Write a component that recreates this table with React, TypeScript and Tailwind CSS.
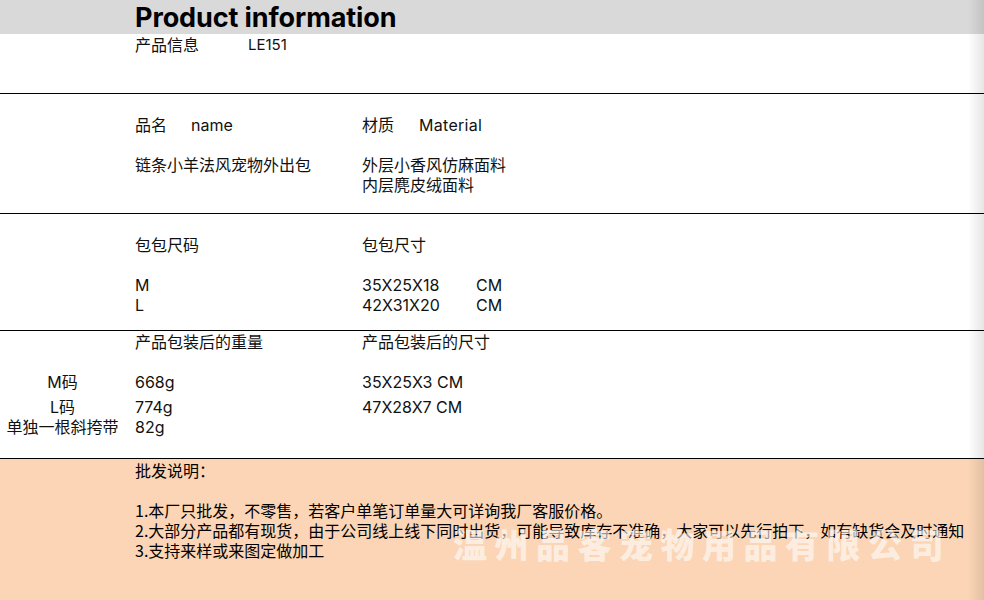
import React from "react";

const sans = { fontFamily: '"Inter", "Noto Sans CJK SC", sans-serif' };
const cjk = { fontFamily: '"Noto Sans CJK SC", "Liberation Sans", sans-serif' };

export default function App() {
  return (
    <div className="relative w-[984px] h-[600px] overflow-hidden bg-white text-[#111]" style={sans}>
      {/* header */}
      <div className="h-[34px] bg-[#d9d9d9] pl-[135px] flex items-center">
        <h1 className="text-[27px] font-bold leading-none tracking-[-0.1px] text-black">Product information</h1>
      </div>
      {/* section 1 */}
      <div className="h-[60px] pl-[135px] pt-[1px] grid grid-cols-[113px_1fr] text-[16px] leading-[20px] border-b border-black">
        <span>产品信息</span>
        <span className="text-[15px]">LE151</span>
      </div>
      {/* section 2 */}
      <div className="h-[120px] pt-[21px] grid grid-cols-[135px_227px_1fr] text-[16px] leading-[20px] border-b border-black">
        <div />
        <div className="flex flex-col gap-[20px]">
          <div className="flex">
            <span className="w-[56px]">品名</span>
            <span>name</span>
          </div>
          <div>链条小羊法风宠物外出包</div>
        </div>
        <div className="flex flex-col gap-[20px]">
          <div className="flex">
            <span className="w-[57px]">材质</span>
            <span className="tracking-[0.3px]">Material</span>
          </div>
          <div>
            <div>外层小香风仿麻面料</div>
            <div>内层麂皮绒面料</div>
          </div>
        </div>
      </div>
      {/* section 3 */}
      <div className="h-[117px] pt-[21px] grid grid-cols-[135px_227px_1fr] text-[16px] leading-[20px] border-b border-black">
        <div />
        <div className="flex flex-col gap-[20px]">
          <div>包包尺码</div>
          <div>
            <div>M</div>
            <div>L</div>
          </div>
        </div>
        <div className="flex flex-col gap-[20px]">
          <div>包包尺寸</div>
          <div>
            <div className="flex"><span className="w-[114px]">35X25X18</span><span>CM</span></div>
            <div className="flex"><span className="w-[114px]">42X31X20</span><span>CM</span></div>
          </div>
        </div>
      </div>
      {/* section 4 */}
      <div className="h-[128px] pt-[1px] grid grid-cols-[135px_227px_1fr] text-[16px] leading-[20px] border-b border-black">
        <div className="flex flex-col items-center pr-[10px] pt-[40px]">
          <div>M码</div>
          <div className="mt-[5px]">L码</div>
          <div>单独一根斜挎带</div>
        </div>
        <div className="flex flex-col">
          <div>产品包装后的重量</div>
          <div className="mt-[20px]">668g</div>
          <div className="mt-[5px]">774g</div>
          <div>82g</div>
        </div>
        <div className="flex flex-col">
          <div>产品包装后的尺寸</div>
          <div className="mt-[20px]">35X25X3 CM</div>
          <div className="mt-[5px]">47X28X7 CM</div>
        </div>
      </div>
      {/* section 5 */}
      <div className="relative h-[141px] bg-[#fbd5b5] pl-[135px] pt-[1px] text-[16px] leading-[20px] text-black" style={cjk}>
        <div>批发说明：</div>
        <div className="mt-[20px]">1.本厂只批发，不零售，若客户单笔订单量大可详询我厂客服价格。</div>
        <div className="whitespace-nowrap">2.大部分产品都有现货，由于公司线上线下同时出货，可能导致库存不准确，大家可以先行拍下，如有缺货会及时通知</div>
        <div>3.支持来样或来图定做加工</div>
        <div
          className="absolute left-[453px] top-[68px] text-[34px] font-black leading-none tracking-[7.5px] text-white/60 whitespace-nowrap pointer-events-none"
          style={cjk}
        >
          温州品客宠物用品有限公司
        </div>
      </div>
      {/* right edge shade */}
      <div className="absolute right-0 top-0 h-full w-[16px] bg-gradient-to-r from-transparent to-black/10 pointer-events-none" />
    </div>
  );
}
